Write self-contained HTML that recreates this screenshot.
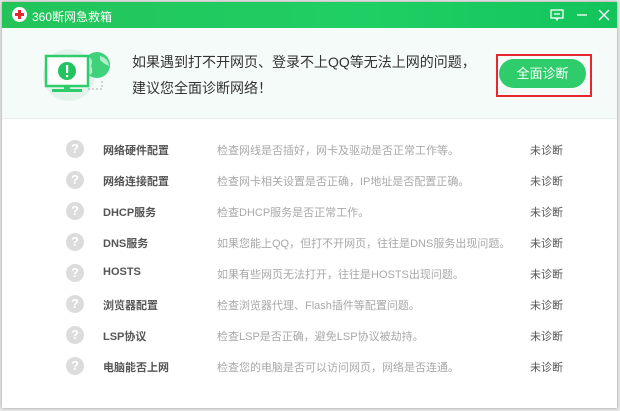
<!DOCTYPE html>
<html><head><meta charset="utf-8"><style>
body{margin:0;width:620px;height:411px;background:#e8e8e8;font-family:"Liberation Sans","Noto Sans CJK SC",sans-serif;overflow:hidden;position:relative}
.win{position:absolute;left:2px;top:2px;width:615px;height:406px;background:#fff;box-shadow:0 0 3px rgba(0,0,0,.35)}
.tb{height:26px;background:linear-gradient(90deg,#23c45a,#1fcf64 60%,#12c45a);color:#fff;font-size:12px;position:relative}
.tb .t{position:absolute;left:30px;top:6px}
.logo{position:absolute;left:10px;top:5px;width:15px;height:15px;border-radius:50%;background:#fff}
.logo:before{content:"";position:absolute;left:6px;top:3px;width:3px;height:9px;background:#e8262f}
.logo:after{content:"";position:absolute;left:3px;top:6px;width:9px;height:3px;background:#e8262f}
.hd{height:90px;background:#f5fbf9;border-bottom:1px solid #e8eeec;position:relative}
.msg{position:absolute;left:130px;top:21px;font-size:14px;line-height:26px;color:#333}
.btn{position:absolute;left:497px;top:57px;width:87px;height:29px;border-radius:15px;background:#2ecc6a;color:#fff;font-size:13px;text-align:center;line-height:29px}
.red{position:absolute;left:494px;top:52px;width:96px;height:43px;border:2px solid #e8262f;box-sizing:border-box}
.row{position:absolute;left:0;height:20px;font-size:11px;width:615px}
.q{position:absolute;left:64px;top:0;width:18px;height:18px;border-radius:50%;background:#dcdcdc;color:#fff;font-weight:bold;font-size:13px;text-align:center;line-height:18px}
.n{position:absolute;left:101px;top:2px;color:#555;font-weight:bold}
.d{position:absolute;left:215px;top:2px;color:#a8a8a8}
.s{position:absolute;left:528px;top:2px;color:#555}
</style></head><body>
<div class="win">
<div class="tb"><div class="logo"></div><span class="t">360断网急救箱</span>
<svg style="position:absolute;left:548px;top:7px" width="14" height="13"><rect x="1" y="1" width="12" height="8" fill="none" stroke="#fff" stroke-width="1.3"/><path d="M4 5H10M6 9L7 11L8 9" stroke="#fff" stroke-width="1.2" fill="none"/></svg>
<svg style="position:absolute;left:574px;top:7px" width="12" height="12"><path d="M1 6H11" stroke="#fff" stroke-width="1.3"/></svg>
<svg style="position:absolute;left:596px;top:7px" width="12" height="12"><path d="M1 1L11 11M11 1L1 11" stroke="#fff" stroke-width="1.4"/></svg>
</div>
<div class="hd">
<svg style="position:absolute;left:40px;top:16px" width="80" height="70">
<circle cx="27" cy="31" r="26" fill="#e3f3ec"/>
<circle cx="55" cy="21" r="13" fill="#3fd27a"/><path d="M46 12Q52 16 49 22Q52 28 48 31Q44 26 44 20Z" fill="#b6ecc9"/><path d="M58 12Q66 14 67 22Q62 20 58 16Z" fill="#b6ecc9"/>
<rect x="4" y="12" width="42" height="30" fill="#fff" stroke="#2ecc6a" stroke-width="2.5"/>
<rect x="10" y="45" width="30" height="3" fill="#2ecc6a"/><rect x="22" y="42" width="6" height="4" fill="#2ecc6a"/>
<circle cx="25" cy="27" r="9" fill="#22c460"/><rect x="24" y="21" width="2.2" height="8" fill="#fff"/><rect x="24" y="31" width="2.2" height="2.2" fill="#fff"/>
<path d="M46 45H60V36" stroke="#aaa" stroke-dasharray="2 2" fill="none"/>
</svg>
<div class="msg">如果遇到打不开网页、登录不上QQ等无法上网的问题，<br>建议您全面诊断网络！</div>
</div>
<div class="btn">全面诊断</div><div class="red"></div>
<div class="row" style="top:138px"><div class="q">?</div><div class="n">网络硬件配置</div><div class="d">检查网线是否插好，网卡及驱动是否正常工作等。</div><div class="s">未诊断</div></div>
<div class="row" style="top:169px"><div class="q">?</div><div class="n">网络连接配置</div><div class="d">检查网卡相关设置是否正确，IP地址是否配置正确。</div><div class="s">未诊断</div></div>
<div class="row" style="top:200px"><div class="q">?</div><div class="n">DHCP服务</div><div class="d">检查DHCP服务是否正常工作。</div><div class="s">未诊断</div></div>
<div class="row" style="top:231px"><div class="q">?</div><div class="n">DNS服务</div><div class="d">如果您能上QQ，但打不开网页，往往是DNS服务出现问题。</div><div class="s">未诊断</div></div>
<div class="row" style="top:262px"><div class="q">?</div><div class="n">HOSTS</div><div class="d">如果有些网页无法打开，往往是HOSTS出现问题。</div><div class="s">未诊断</div></div>
<div class="row" style="top:293px"><div class="q">?</div><div class="n">浏览器配置</div><div class="d">检查浏览器代理、Flash插件等配置问题。</div><div class="s">未诊断</div></div>
<div class="row" style="top:324px"><div class="q">?</div><div class="n">LSP协议</div><div class="d">检查LSP是否正确，避免LSP协议被劫持。</div><div class="s">未诊断</div></div>
<div class="row" style="top:355px"><div class="q">?</div><div class="n">电脑能否上网</div><div class="d">检查您的电脑是否可以访问网页，网络是否连通。</div><div class="s">未诊断</div></div>
</div>
</body></html>
